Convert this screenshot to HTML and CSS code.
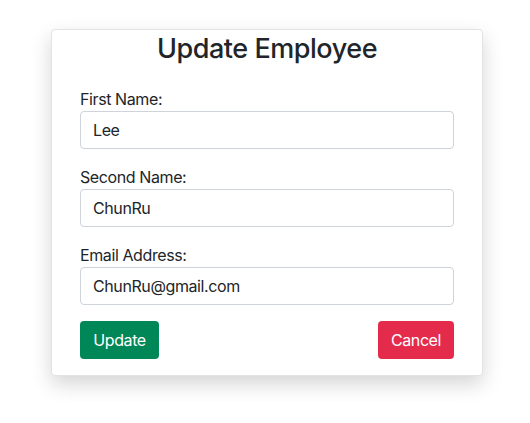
FILE: index.html
```html
<!DOCTYPE html>
<html>
<head>
<meta charset="utf-8">
<link rel="stylesheet" href="styles.css">
</head>
<body>
<div class="card">
  <h3 class="title">Update Employee</h3>
  <form class="form">
    <div class="group">
      <label class="label">First Name:</label>
      <input class="input" type="text" value="Lee">
    </div>
    <div class="group">
      <label class="label">Second Name:</label>
      <input class="input" type="text" value="ChunRu">
    </div>
    <div class="group">
      <label class="label">Email Address:</label>
      <input class="input" type="text" value="ChunRu@gmail.com">
    </div>
    <div class="actions">
      <button type="button" class="btn btn-update">Update</button>
      <button type="button" class="btn btn-cancel">Cancel</button>
    </div>
  </form>
</div>
</body>
</html>
```
FILE: styles.css
```css
* { box-sizing: border-box; }
html, body { height: 100%; }
body {
  margin: 0;
  padding-top: 29px;
  background: #fff;
  font-family: Inter, "Noto Sans", sans-serif;
  color: #212529;
  letter-spacing: -0.4px;
}
.card {
  margin: 0 0 0 51px;
  width: 432px;
  height: 347px;
  background: #fff;
  border: 1px solid #e3e3e3;
  border-radius: 4px;
  box-shadow: 0 8px 20px rgba(0,0,0,0.17);
  padding: 0 28px;
}
.title {
  margin: 2px 0 0;
  font-size: 27px;
  font-weight: 500;
  line-height: 34px;
  text-align: center;
  color: #212529;
  letter-spacing: -0.45px;
}
.form {
  margin-top: 21px;
}
.group {
  display: flex;
  flex-direction: column;
  margin-bottom: 16px;
}
.label {
  font-size: 16px;
  line-height: 24px;
}
.input {
  height: 38px;
  border: 1px solid #ced4da;
  border-radius: 4px;
  padding: 6px 12px;
  font-family: inherit;
  font-size: 16px;
  color: #212529;
  letter-spacing: -0.4px;
}
.actions {
  display: flex;
  justify-content: space-between;
}
.btn {
  height: 38px;
  border: none;
  border-radius: 4px;
  padding: 6px 12px;
  font-family: inherit;
  font-size: 16px;
  color: #fff;
  letter-spacing: -0.4px;
}
.btn-update { background: #008757; width: 79px; }
.btn-cancel { background: #e52b4c; width: 76px; }
```
